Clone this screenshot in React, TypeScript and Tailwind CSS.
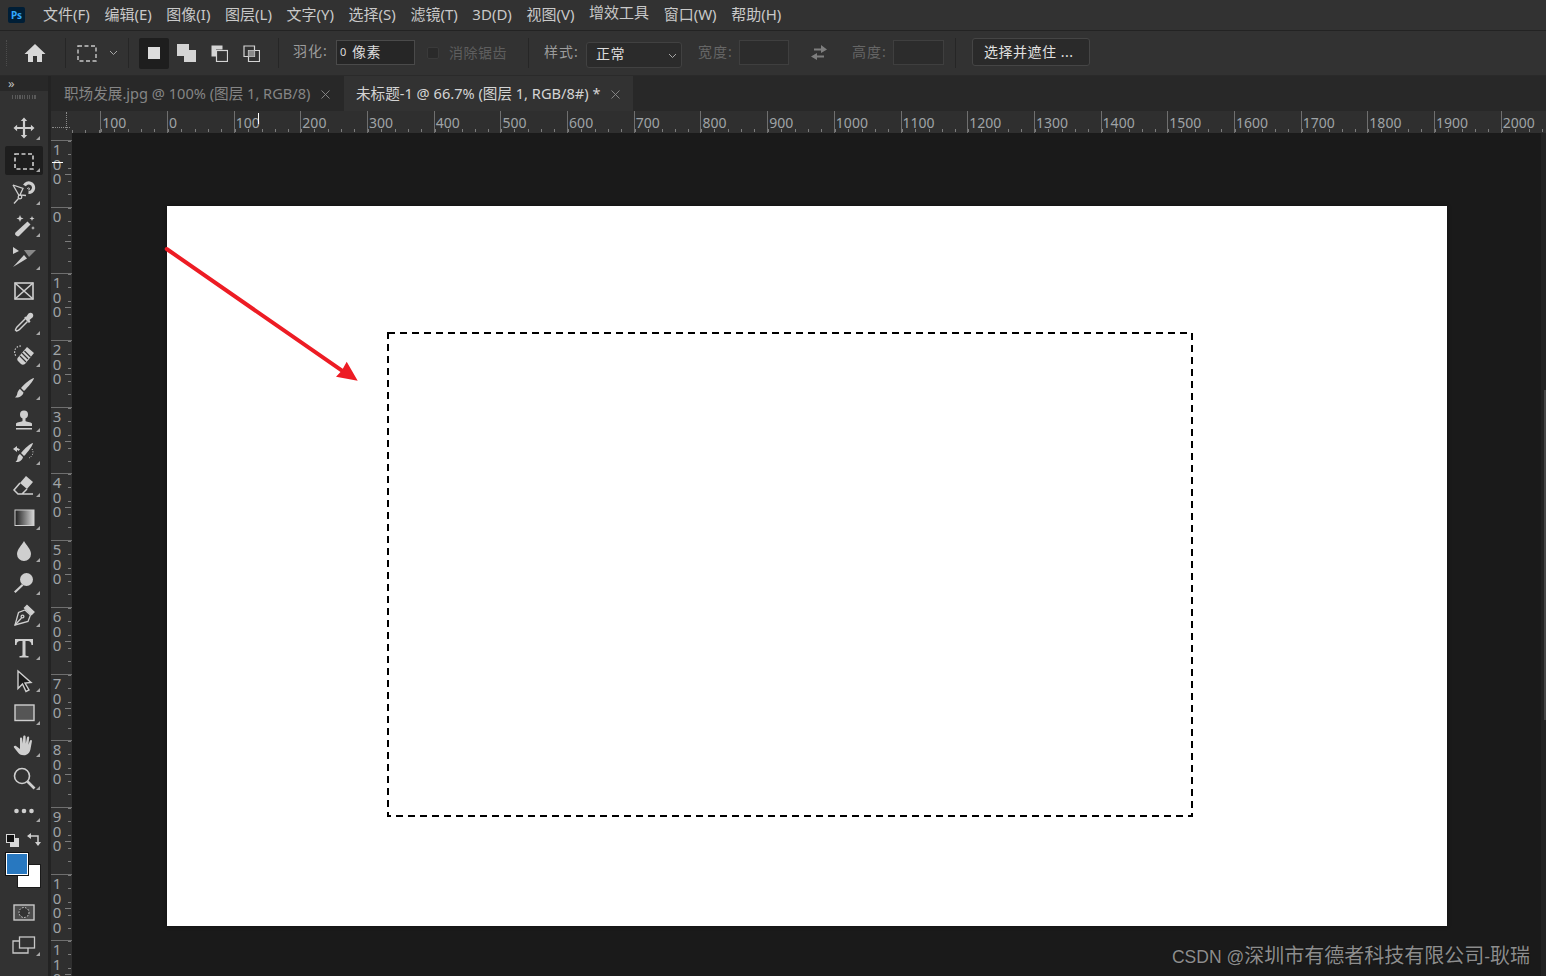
import React from "react";

const FONT = "font-['Noto_Sans','Noto_Sans_CJK_SC',sans-serif]";

const menus = [
  { label: "文件(F)" },
  { label: "编辑(E)" },
  { label: "图像(I)" },
  { label: "图层(L)" },
  { label: "文字(Y)" },
  { label: "选择(S)" },
  { label: "滤镜(T)" },
  { label: "3D(D)" },
  { label: "视图(V)" },
  { label: "增效工具", raised: true },
  { label: "窗口(W)" },
  { label: "帮助(H)" },
];

const hLabels = ["100", "0", ...Array.from({ length: 20 }, (_, i) => String((i + 1) * 100))];
const vLabels = ["100", "0", ...Array.from({ length: 11 }, (_, i) => String((i + 1) * 100))];

const C = "#cfcfcf";

const toolIcons: React.ReactNode[] = [
  // move
  <path key="m" fill={C} d="M12 1.5l3.2 3.6h-2.1v5.8h5.800V8.800l3.600 3.200-3.600 3.200v-2.100h-5.800v5.800h2.100L12 22.500l-3.200-3.600h2.100v-5.800H5.100v2.100L1.500 12l3.600-3.200v2.100h5.800V5.100H8.800z" />,
  // marquee
  <rect key="r" x="3" y="5" width="18" height="15" fill="none" stroke={C} strokeWidth="1.600" strokeDasharray="4 2.500" />,
  // magnetic lasso
  <g key="l" fill="none" stroke={C} strokeWidth="1.300">
    <path d="M1 4l10 3.500L8 14l6 0.500" />
    <path d="M1 4l6 10.500" />
    <circle cx="8" cy="16" r="1.800" />
    <path d="M6.500 17.500L2 22.500" />
    <path d="M12.500 4.500a4.800 4.800 0 1 1 4 7" strokeWidth="3.200" />
    <path d="M15.500 8a1 1 0 1 1 .8 .9" strokeWidth="1" />
  </g>,
  // wand
  <g key="w" fill={C}>
    <path d="M15.500 7.500l3 3L7 22c-1 1-2.500 0-3-.5s-1.500-2 -.5-3z" />
    <path d="M8 1l1 2.500L11.500 4.500 9 5.500 8 8 7 5.500 4.500 4.500 7 3.500zM20 2l.7 1.800 1.800.7-1.800.7L20 7l-.7-1.800-1.800-.7 1.800-.7zM21 12l.6 1.400 1.400.6-1.400.6L21 16l-.6-1.400-1.400-.6 1.400-.6z" />
  </g>,
  // slice
  <g key="s" fill={C}>
    <path d="M1 1l6 4-6 3z" />
    <path d="M12 4h12l-7 7z" opacity="0.550" />
    <path d="M1 21l11-12 3 3.500z" />
  </g>,
  // frame
  <g key="f" fill="none" stroke={C} strokeWidth="1.600">
    <rect x="3" y="4" width="18" height="16" />
    <path d="M3 4l18 16M21 4L3 20" />
  </g>,
  // eyedropper
  <g key="e">
    <path fill={C} d="M14 6l2.500-3.500c1.200-1 3-1 4 0s1 2.800 0 4L17.500 9l1 1.500-1.500 1.500-5-5 1.500-1.500z" />
    <path fill="none" stroke={C} strokeWidth="1.500" d="M13 8l-8 8c-1 1-1.500 3-1.500 3l1 1s2-.5 3-1.500l8-8" />
  </g>,
  // healing
  <g key="h">
    <path fill={C} d="M15 3l7 6-9 11c-1.500 1-3 1-4 0l-3-3c-1-1-1-2.500 0-3.500z" />
    <path stroke="#323232" strokeWidth="1.200" d="M10 9l6 6M12.500 7l6 6M8 12l6 6" />
    <path fill="none" stroke={C} strokeWidth="1.200" strokeDasharray="1.500 1.500" d="M9 2C3 2 1 8 4 12" />
  </g>,
  // brush
  <g key="b" fill={C}>
    <path d="M22 2c0 2-6 9-10 13l-3-3c3-4 11-10 13-10z" />
    <path d="M8 13l3.500 3.500c-.5 3-4 5.500-8.500 5 2-1.500 2-3 2.500-5 .5-1.500 1.500-3 2.500-3.500z" />
  </g>,
  // stamp
  <g key="st" fill={C}>
    <circle cx="12" cy="5.500" r="4" />
    <path d="M10.500 8h3v4c0 1 5.500 1 6.500 2.500V17H4v-2.500C5 13 10.500 13 10.500 12z" />
    <rect x="4" y="19" width="16" height="1.500" />
  </g>,
  // history brush
  <g key="hb" fill={C}>
    <path d="M21 2c0 2-5 9-9 13l-3-3c3-4 10-10 12-10z" />
    <path d="M8 13l3 3c-.5 3-3.500 5.500-7.500 5 2-1.500 1.800-3 2.200-5 .4-1.500 1.300-2.500 2.300-3z" />
    <path d="M1 8l4-3v2c1 0 2 .5 3 1.500L6.500 10C6 9.500 5.500 9 5 9v2z" />
    <path fill="none" stroke={C} strokeWidth="1" strokeDasharray="1 1.500" d="M20 8c2 3 1 7-3 9" />
  </g>,
  // eraser
  <g key="er">
    <path fill={C} d="M14 2l7 6-6 7-7-6z" />
    <path fill="none" stroke={C} strokeWidth="1.500" d="M8 9l-6 7 4 4h15M15 15l-5 5" />
  </g>,
  // gradient
  <g key="g">
    <defs>
      <linearGradient id="grad" x1="0" x2="1">
        <stop offset="0" stopColor="#1c1c1c" />
        <stop offset="1" stopColor="#d8d8d8" />
      </linearGradient>
    </defs>
    <rect x="3" y="4" width="19" height="15.500" fill="url(#grad)" stroke={C} strokeWidth="1" />
  </g>,
  // blur
  <path key="bl" fill={C} d="M12 2c2 4 7 8 7 13a7 7 0 0 1-14 0c0-5 5-9 7-13z" />,
  // dodge
  <g key="d" fill={C}>
    <circle cx="14.500" cy="8.500" r="6.500" />
    <path d="M10 13l1.500 1.500L3.500 22 2 20.500z" />
  </g>,
  // pen
  <g key="p" fill="none" stroke={C} strokeWidth="1.300">
    <path d="M13 6l5.500 5-2.500 6.500L3 21l3.500-12.500z" />
    <path d="M15 1.500l7 6.500-2.500 2.500-7-6.500z" fill={C} />
    <path d="M3 21l6.500-7" />
    <circle cx="10.500" cy="12.500" r="1.400" />
  </g>,
  // type
  <path key="t" fill={C} d="M3 3h18v6h-1.500c-.3-3-1.500-4-3.500-4h-2.500v14c0 .8.800 1 3 1v1.500H7.500V20c2.200 0 3-.2 3-1V5H8C6 5 4.800 6 4.500 9H3z" />,
  // path select
  <path key="ps" fill="#1c1c1c" stroke={C} strokeWidth="1.400" d="M6 2l13 11.500-6 .5 4 7-3 1.500-3.500-7.500L6 19.500z" />,
  // rectangle
  <rect key="rc" x="3" y="4" width="19" height="15.500" fill="#555" stroke={C} strokeWidth="1.400" />,
  // hand
  <path key="hd" fill={C} d="M8 4.500c0-1.500 2-1.500 2.200 0l.6 5 .4-7c.1-1.500 2.300-1.500 2.400 0l.2 7 1.200-6c.3-1.400 2.300-1.100 2.200.3l-.8 7 1.500-4c.5-1.300 2.300-.8 2 .6l-1.500 8c-.6 3-3 5.800-6.500 5.800-3 0-5-1-6.500-3.500L2 13.500c-.7-1.200.8-2.400 2-1.400l4 3z" />,
  // zoom
  <g key="z" fill="none" stroke={C} strokeWidth="1.600">
    <circle cx="10" cy="10" r="7.500" />
    <path d="M15.500 15.500l7 7" strokeWidth="2.600" />
  </g>,
  // more
  <g key="mo" fill={C}>
    <circle cx="4.500" cy="12" r="2.300" />
    <circle cx="12" cy="12" r="2.300" />
    <circle cx="19.500" cy="12" r="2.300" />
  </g>,
];

const noCorner = [5];

function Divider() {
  return <div className="w-px h-[30px] bg-[#262626] shrink-0" />;
}

function Chevron({ className }: { className: string }) {
  return (
    <svg width="9" height="6" viewBox="0 0 9 6" className={className}>
      <path d="M1 1l3.500 3.500L8 1" fill="none" stroke="#a8a8a8" strokeWidth="1" />
    </svg>
  );
}

function CloseIcon({ className }: { className: string }) {
  return (
    <svg width="9" height="9" viewBox="0 0 9 9" className={className}>
      <path d="M0.500 0.500l8 8M8.500 0.500l-8 8" stroke="#8c8c8c" strokeWidth="0.900" />
    </svg>
  );
}

function MenuBar() {
  return (
    <div className={`h-[31px] shrink-0 flex items-center bg-[#323232] border-b border-[#232323] text-[15px] text-[#c9c9c9] ${FONT}`}>
      <div className="ml-[8px] w-[17px] h-[16px] rounded-[2px] bg-[#001e36] flex items-center justify-center text-[10px] font-bold text-[#31a8ff] leading-none">
        Ps
      </div>
      <div className="ml-[18px] -mt-[2px] flex items-center gap-[14.600px]">
        {menus.map((m) => (
          <span key={m.label} className={m.raised ? "-mt-[4px]" : ""}>
            {m.label}
          </span>
        ))}
      </div>
    </div>
  );
}

function OptionsBar() {
  return (
    <div className={`h-[45px] shrink-0 flex items-center bg-[#323232] border-b border-[#2a2a2a] text-[14px] ${FONT}`}>
      {/* grip */}
      <div className="ml-[6px] w-[2px] h-[26px] border-l border-dotted border-[#4c4c4c]" />
      <svg width="24" height="22" viewBox="0 0 24 22" className="ml-[15px] shrink-0">
        <path fill="#d8d8d8" d="M12 2L1.500 12H5v8h5v-6h4v6h5v-8h3.500z" />
      </svg>
      <div className="ml-[18px]">
        <Divider />
      </div>
      <svg width="20" height="17" viewBox="0 0 20 17" className="ml-[11px] shrink-0">
        <rect x="1" y="1" width="18" height="15" fill="none" stroke="#c8c8c8" strokeWidth="1.400" strokeDasharray="4 2.500" />
      </svg>
      <Chevron className="ml-[12px] shrink-0" />
      <div className="ml-[10px]">
        <Divider />
      </div>
      <div className="ml-[10px] w-[30px] h-[31px] rounded-[2px] bg-[#1e1e1e] flex items-center justify-center shrink-0">
        <div className="w-[12px] h-[12px] bg-[#dcdcdc]" />
      </div>
      <svg width="19" height="18" viewBox="0 0 19 18" className="ml-[8px] shrink-0">
        <path fill="#d4d4d4" d="M0 0h12v6h7v12H7v-6H0z" />
      </svg>
      <svg width="17" height="17" viewBox="0 0 17 17" className="ml-[15px] shrink-0">
        <path fill="#d4d4d4" d="M0.500 0.500h11v4H5v7H0.500z" />
        <rect x="5.500" y="5.500" width="11" height="11" fill="none" stroke="#d4d4d4" strokeWidth="1.200" />
      </svg>
      <svg width="17" height="17" viewBox="0 0 17 17" className="ml-[15px] shrink-0">
        <path fill="none" stroke="#d4d4d4" strokeWidth="1.200" d="M1 1h10.500v10.500H1zM5.500 5.500h11v11h-11z" />
        <rect x="5.500" y="5.500" width="6" height="6" fill="#8a8a8a" />
      </svg>
      <div className="ml-[18px]">
        <Divider />
      </div>
      <span className="ml-[14px] text-[#9c9c9c] -mt-[5px] w-[36px] shrink-0 whitespace-nowrap tracking-[1px]">羽化:</span>
      <div className="ml-[7px] w-[79px] h-[25px] -mt-[2px] bg-[#262626] border border-[#4a4a4a] flex items-center pl-[3px] text-[#dcdcdc] shrink-0">
        <span className="text-[11px] w-[12px]">0</span>
        <span className="-mt-[2px] tracking-[0.5px]">像素</span>
      </div>
      <div className="ml-[12px] w-[12px] h-[12px] rounded-[2px] bg-[#2a2a2a] border border-[#3a3a3a] shrink-0" />
      <span className="ml-[10px] -mt-[2px] text-[#5e5e5e] whitespace-nowrap tracking-[0.5px] shrink-0">消除锯齿</span>
      <div className="ml-[21px]">
        <Divider />
      </div>
      <span className="ml-[15px] text-[#9c9c9c] -mt-[4px] w-[35px] shrink-0 whitespace-nowrap tracking-[1px]">样式:</span>
      <div className="ml-[7px] w-[96px] h-[26px] mt-[3px] rounded-[3px] bg-[#2b2b2b] border border-[#414141] flex items-center justify-between pl-[9px] pr-[4px] text-[#dcdcdc] shrink-0">
        <span className="-mt-[3px] tracking-[0.5px]">正常</span>
        <Chevron className="mt-[3px]" />
      </div>
      <span className="ml-[16px] text-[#666666] -mt-[4px] w-[35px] shrink-0 whitespace-nowrap tracking-[1px]">宽度:</span>
      <div className="ml-[6px] w-[50px] h-[25px] -mt-[2px] bg-[#2c2c2c] border border-[#3f3f3f] shrink-0" />
      <svg width="18" height="16" viewBox="0 0 18 16" className="ml-[21px] shrink-0">
        <path fill="#7e7e7e" d="M11 0l6 4.500L11 8V5.500H4v-2h7zM7 8v2.500h7v2H7V15L1 11.500z" />
      </svg>
      <span className="ml-[24px] text-[#666666] -mt-[4px] w-[35px] shrink-0 whitespace-nowrap tracking-[1px]">高度:</span>
      <div className="ml-[6px] w-[51px] h-[25px] -mt-[2px] bg-[#2c2c2c] border border-[#3f3f3f] shrink-0" />
      <div className="ml-[11px]">
        <Divider />
      </div>
      <div className="ml-[16px] w-[118px] h-[28px] -mt-[3px] rounded-[3px] bg-[#2a2a2a] border border-[#454545] flex items-center pl-[11px] text-[#e0e0e0] tracking-[0.5px] shrink-0 whitespace-nowrap">
        选择并遮住 ...
      </div>
    </div>
  );
}

function ToolStrip() {
  return (
    <aside className="w-[48px] shrink-0 flex flex-col bg-[#323232] overflow-hidden">
      <div className={`h-[15px] shrink-0 bg-[#282828] pl-[8px] text-[13px] leading-[14px] text-[#bdbdbd] ${FONT}`}>»</div>
      <div className="h-[4px] mt-[4px] mx-[12px] shrink-0 bg-[repeating-linear-gradient(90deg,#5a5a5a_0,#5a5a5a_1px,transparent_1px,transparent_2.500px)]" />
      <div className="h-[13px] shrink-0" />
      <div className="flex flex-col">
        {toolIcons.map((icon, i) => (
          <div key={i} className="relative h-[32.5px] shrink-0 flex items-center justify-center">
            {i === 1 && <div className="absolute left-[5px] right-[5px] top-[1px] bottom-[2px] rounded-[2px] bg-[#1e1e1e]" />}
            <svg width="24" height="24" viewBox="0 0 24 24" className="relative">
              {icon}
            </svg>
            {!noCorner.includes(i) && (
              <div className="absolute left-[36px] bottom-[5px] w-0 h-0 border-l-[4px] border-l-transparent border-b-[4px] border-b-[#a8a8a8]" />
            )}
          </div>
        ))}
      </div>

      {/* default / swap colours */}
      <div className="mt-[6px] ml-[6px] flex items-center gap-[8px] shrink-0">
        <svg width="13" height="13" viewBox="0 0 13 13">
          <rect x="4" y="4" width="9" height="9" fill="#d8d8d8" />
          <rect x="0.500" y="0.500" width="8" height="8" fill="#111" stroke="#d8d8d8" />
        </svg>
        <svg width="14" height="14" viewBox="0 0 14 14">
          <path fill="none" stroke="#cfcfcf" strokeWidth="1.500" d="M1 3h10v9" />
          <path fill="#cfcfcf" d="M4 0v6L0 3zM8 9h6l-3 4z" />
        </svg>
      </div>
      {/* colour swatches */}
      <div className="relative mt-[5px] ml-[5px] h-[36px] w-[36px] shrink-0">
        <div className="absolute left-[12px] top-[12px] w-[24px] h-[24px] bg-white border border-[#1a1a1a]" />
        <div className="absolute left-0 top-0 w-[24px] h-[24px] bg-[#2878c0] border border-[#111] outline outline-[1px] outline-white -outline-offset-2" />
      </div>
      <div className="mt-[16px] flex justify-center shrink-0">
        <svg width="22" height="17" viewBox="0 0 22 17">
          <rect x="1" y="1" width="20" height="15" fill="#4c4c4c" stroke="#c8c8c8" strokeWidth="1.400" />
          <circle cx="11" cy="8.500" r="5" fill="#323232" stroke="#d8d8d8" strokeWidth="1" strokeDasharray="1.500 1.500" />
        </svg>
      </div>
      <div className="mt-[15px] relative flex justify-center shrink-0">
        <svg width="24" height="18" viewBox="0 0 24 18">
          <path fill="none" stroke="#c8c8c8" strokeWidth="1.300" d="M1 5h15v12H1z" />
          <rect x="7.500" y="1" width="15" height="11" fill="#323232" stroke="#c8c8c8" strokeWidth="1.300" />
        </svg>
        <div className="absolute left-[36px] bottom-[-2px] w-0 h-0 border-l-[4px] border-l-transparent border-b-[4px] border-b-[#a8a8a8]" />
      </div>
    </aside>
  );
}

function Tabs() {
  return (
    <div className={`h-[35px] shrink-0 flex bg-[#282828] text-[14.600px] ${FONT}`}>
      <div className="relative w-[293px] shrink-0 flex items-center pl-[13px] text-[#858585] whitespace-nowrap">
        <span>职场发展.jpg @ 100% (图层 1, RGB/8)</span>
        <CloseIcon className="absolute left-[270px] top-[14px]" />
      </div>
      <div className="relative w-[289px] shrink-0 flex items-center pl-[12px] bg-[#323232] text-[#d4d4d4] whitespace-nowrap">
        <span>未标题-1 @ 66.7% (图层 1, RGB/8#) *</span>
        <CloseIcon className="absolute left-[267px] top-[14px]" />
      </div>
    </div>
  );
}

function HorizontalRuler() {
  return (
    <div className={`relative h-[22px] shrink-0 flex bg-[#2f2f2f] overflow-hidden text-[14px] text-[#9fa3a6] ${FONT}`}>
      {/* corner */}
      <div className="relative w-[21px] shrink-0">
        <div className="absolute left-[15px] top-[1px] h-[18px] border-l border-dotted border-[#8a8a8a]" />
        <div className="absolute left-[1px] top-[16px] w-[18px] border-t border-dotted border-[#8a8a8a]" />
      </div>
      <div className="w-[28.300px] shrink-0 bg-[repeating-linear-gradient(90deg,#7c7c7c_0,#7c7c7c_1px,transparent_1px,transparent_13.340px)] bg-[length:100%_3px] bg-bottom bg-no-repeat" />
      {hLabels.map((label, i) => (
        <div
          key={i}
          className="relative w-[66.690px] h-full shrink-0 border-l border-[#6f6f6f] bg-[repeating-linear-gradient(90deg,#7c7c7c_0,#7c7c7c_1px,transparent_1px,transparent_13.340px)] bg-[length:100%_3px] bg-[position:0_18px] bg-no-repeat"
        >
          <span className="absolute left-[1px] top-[2px] leading-[20px]">{label}</span>
        </div>
      ))}
      {/* cursor position */}
      <div className="absolute left-[207px] top-[2px] w-px h-[11px] bg-white" />
    </div>
  );
}

function VerticalRuler() {
  return (
    <div className={`relative w-[21px] shrink-0 flex flex-col bg-[#2f2f2f] overflow-hidden text-[15px] text-[#9fa3a6] ${FONT}`}>
      <div className="h-[7px] shrink-0" />
      {vLabels.map((label, i) => (
        <div
          key={i}
          className="relative h-[66.690px] shrink-0 border-t border-[#6f6f6f] bg-[repeating-linear-gradient(180deg,#7c7c7c_0,#7c7c7c_1px,transparent_1px,transparent_13.340px)] bg-[length:3px_100%] bg-[position:17px_0] bg-no-repeat"
        >
          <span className="absolute left-0 top-[-2px] leading-[12px] [writing-mode:vertical-lr] [text-orientation:upright] tracking-[-5.300px] whitespace-nowrap">
            {label}
          </span>
          <div className="absolute left-[14px] top-[33px] w-[6px] h-px bg-[#7c7c7c]" />
        </div>
      ))}
      {/* cursor position */}
      <div className="absolute left-[1px] top-[29px] w-[11px] h-px bg-white" />
    </div>
  );
}

function Canvas() {
  return (
    <main className="relative flex-1 min-w-0 bg-[#1a1a1a] overflow-hidden pl-[95px] pt-[73px]">
      <div className="relative w-[1280px] h-[720px] bg-white shadow-[0_0_4px_rgba(0,0,0,0.4)]">
        {/* marquee selection */}
        <svg width="808" height="487" viewBox="0 0 808 487" className="absolute left-[220px] top-[126px]">
          <rect x="1" y="1" width="804" height="483" fill="none" stroke="#000" strokeWidth="2" strokeDasharray="7 5" />
        </svg>
      </div>
      {/* arrow drawn over the page */}
      <svg width="210" height="150" viewBox="0 0 210 150" className="absolute left-[90px] top-[105px]">
        <path d="M4.700 11L180 132.700" stroke="#ed1c24" strokeWidth="4" strokeLinecap="round" fill="none" />
        <path d="M195.700 142.700L174 138.700l5.700-6 5-9z" fill="#ed1c24" />
      </svg>
      {/* scrollbar track */}
      <div className="absolute right-0 top-0 bottom-0 w-[5px] bg-[#222222] flex justify-end">
        <div className="mt-[257px] w-[2px] h-[330px] bg-[#444444]" />
      </div>
      {/* watermark */}
      <div className="absolute right-[16px] bottom-[4px] text-[20px] leading-[30px] text-[#8d8d8d] whitespace-nowrap font-['Liberation_Sans','Noto_Sans_CJK_SC',sans-serif] [text-shadow:0_0_1px_rgba(0,0,0,0.6)]">
        <span className="text-[17.500px]">CSDN @</span>深圳市有德者科技有限公司<span className="text-[17.500px]">-</span>耿瑞
      </div>
    </main>
  );
}

export default function App() {
  return (
    <div className="relative w-[1546px] h-[976px] flex flex-col bg-[#1a1a1a] overflow-hidden">
      <MenuBar />
      <OptionsBar />
      <div className="flex-1 min-h-0 flex">
        <ToolStrip />
        <div className="w-[3px] shrink-0 bg-[#232323]" />
        <div className="flex-1 min-w-0 flex flex-col">
          <Tabs />
          <HorizontalRuler />
          <div className="flex-1 min-h-0 flex">
            <VerticalRuler />
            <Canvas />
          </div>
        </div>
      </div>
    </div>
  );
}
